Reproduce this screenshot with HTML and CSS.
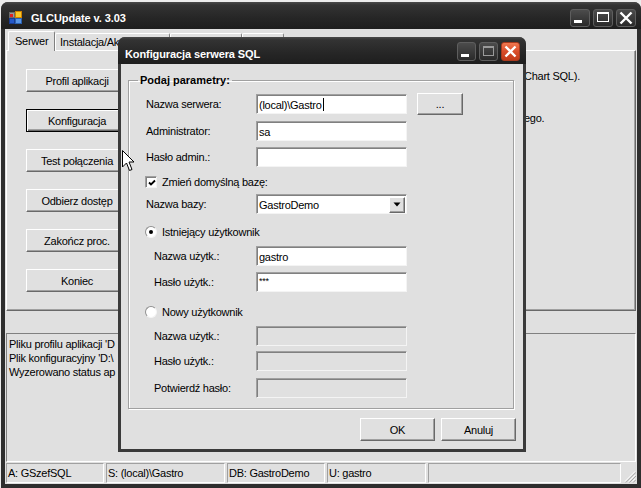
FILE: index.html
```html
<!DOCTYPE html>
<html lang="pl">
<head>
<meta charset="utf-8">
<title>GLCUpdate v. 3.03</title>
<link rel="stylesheet" href="styles.css">
</head>
<body>
<div class="desktop">

  <div class="window main-window">
    <div class="titlebar main-title">
      <svg class="app-icon" width="13" height="13" viewBox="0 0 13 13">
        <rect x="0.5" y="1.5" width="5" height="5" fill="#9a9a9a" stroke="#6a6a6a"/>
        <rect x="1" y="3" width="3" height="3" fill="#e02020"/>
        <rect x="6.5" y="0.5" width="6" height="6" fill="#f8c828" stroke="#d08000"/>
        <rect x="0.5" y="7.5" width="5" height="5" fill="#2458c8" stroke="#1a3c90"/>
        <rect x="6.5" y="7.5" width="6" height="5" fill="#5a96e6" stroke="#2a60b0"/>
      </svg>
      <span class="title">GLCUpdate v. 3.03</span>
      <div class="caption-buttons">
        <span class="cbtn"><svg width="20" height="18" viewBox="0 0 20 18"><rect x="4" y="11" width="8" height="3" fill="#fff"/></svg></span>
        <span class="cbtn"><svg width="20" height="18" viewBox="0 0 20 18"><rect x="4.5" y="3.5" width="11" height="9" fill="none" stroke="#fff"/><rect x="4" y="3" width="12" height="2" fill="#fff"/></svg></span>
        <span class="cbtn"><svg width="20" height="18" viewBox="0 0 20 18"><path d="M4.5 3.5 L15.5 14.5 M15.5 3.5 L4.5 14.5" stroke="#fff" stroke-width="2.4"/></svg></span>
      </div>
    </div>

    <div class="client">
      <div class="tabstrip">
        <span class="tab active">Serwer</span>
        <span class="tab t-install">Instalacja/Ak</span>
        <span class="tab t-tools"></span>
        <span class="tab t-info"></span>
      </div>

      <div class="tabpage">
        <div class="actions">
          <button class="btn action">Profil aplikacji</button>
          <button class="btn action default">Konfiguracja</button>
          <button class="btn action">Test połączenia</button>
          <button class="btn action">Odbierz dostęp</button>
          <button class="btn action">Zakończ proc.</button>
          <button class="btn action">Koniec</button>
        </div>
        <div class="info">
          <div class="info-line">Chart SQL).</div>
          <div class="info-line">&nbsp;</div>
          <div class="info-line">&nbsp;</div>
          <div class="info-line">ego.</div>
        </div>
      </div>

      <div class="splitter"></div>

      <div class="log">
        <div class="log-line">Pliku profilu aplikacji 'D</div>
        <div class="log-line">Plik konfiguracyjny 'D:\</div>
        <div class="log-line">Wyzerowano status ap</div>
      </div>

      <div class="statusbar">
        <span class="panel p1">A: GSzefSQL</span>
        <span class="panel p2">S: (local)\Gastro</span>
        <span class="panel p3">DB: GastroDemo</span>
        <span class="panel p4">U: gastro</span>
        <span class="panel p5"></span>
        <svg class="grip" width="14" height="14" viewBox="0 0 14 14">
          <path d="M13 2 L2 13 M13 6 L6 13 M13 10 L10 13" stroke="#fff" stroke-width="1"/>
          <path d="M14 3 L3 14 M14 7 L7 14 M14 11 L11 14" stroke="#a0a0a0" stroke-width="1"/>
        </svg>
      </div>
    </div>
  </div>

  <div class="window dialog">
    <div class="titlebar dlg-title">
      <span class="title">Konfiguracja serwera SQL</span>
      <div class="caption-buttons">
        <span class="cbtn small"><svg width="19" height="19" viewBox="0 0 19 19"><rect x="4" y="12" width="8" height="3" fill="#fff"/></svg></span>
        <span class="cbtn small"><svg width="19" height="19" viewBox="0 0 19 19"><rect x="4.5" y="4.5" width="10" height="9" fill="none" stroke="#9a9a9a"/><rect x="4" y="4" width="11" height="2" fill="#9a9a9a"/></svg></span>
        <span class="cbtn small close"><svg width="19" height="19" viewBox="0 0 19 19"><path d="M4.5 4.5 L14.5 14.5 M14.5 4.5 L4.5 14.5" stroke="#fff" stroke-width="2.4"/></svg></span>
      </div>
    </div>

    <div class="dlg-body">
      <fieldset class="group">
        <legend>Podaj parametry:</legend>

        <div class="row r1">
          <span class="lbl">Nazwa serwera:</span>
          <span class="field">(local)\Gastro<span class="caret"></span></span>
          <button class="btn browse">...</button>
        </div>
        <div class="row r2">
          <span class="lbl">Administrator:</span>
          <span class="field">sa</span>
        </div>
        <div class="row r3">
          <span class="lbl">Hasło admin.:</span>
          <span class="field"></span>
        </div>
        <div class="row r4 opt">
          <span class="check"><svg width="8" height="8" viewBox="0 0 8 8"><path d="M1 3.5 L3 5.5 L7 1.5" fill="none" stroke="#000" stroke-width="1.8"/></svg></span>
          <span class="opt-text">Zmień domyślną bazę:</span>
        </div>
        <div class="row r5">
          <span class="lbl">Nazwa bazy:</span>
          <span class="field combo">GastroDemo
            <span class="drop"><svg width="8" height="5" viewBox="0 0 8 5"><path d="M0.5 0.5 H7.5 L4 4.5 Z" fill="#000"/></svg></span>
          </span>
        </div>
        <div class="row r6 opt">
          <span class="radio on"></span>
          <span class="opt-text">Istniejący użytkownik</span>
        </div>
        <div class="row r7 sub">
          <span class="lbl">Nazwa użytk.:</span>
          <span class="field">gastro</span>
        </div>
        <div class="row r8 sub">
          <span class="lbl">Hasło użytk.:</span>
          <span class="field pass">***</span>
        </div>
        <div class="row r9 opt">
          <span class="radio"></span>
          <span class="opt-text">Nowy użytkownik</span>
        </div>
        <div class="row r10 sub">
          <span class="lbl">Nazwa użytk.:</span>
          <span class="field disabled"></span>
        </div>
        <div class="row r11 sub">
          <span class="lbl">Hasło użytk.:</span>
          <span class="field disabled"></span>
        </div>
        <div class="row r12 sub">
          <span class="lbl">Potwierdź hasło:</span>
          <span class="field disabled"></span>
        </div>
      </fieldset>

      <div class="dlg-buttons">
        <button class="btn dlg-btn">OK</button>
        <button class="btn dlg-btn">Anuluj</button>
      </div>
    </div>
  </div>

  <svg class="cursor" width="13" height="22" viewBox="0 0 13 22">
    <path d="M0.5 0.5 V17 L4.5 13 L7.5 20.5 L10 19.5 L7 12 H12 Z" fill="#fff" stroke="#000" stroke-linejoin="miter"/>
  </svg>
</div>
</body>
</html>
```

FILE: styles.css
```css
* { box-sizing: border-box; }

html, body {
  margin: 0;
  padding: 0;
}

body {
  width: 641px;
  height: 488px;
  overflow: hidden;
  background: #ececec;
  font-family: "Liberation Sans", Arial, sans-serif;
  font-size: 11px;
  letter-spacing: -0.25px;
  color: #000;
}

.desktop {
  position: relative;
  width: 641px;
  height: 488px;
}

.window {
  position: absolute;
  display: flex;
  flex-direction: column;
}

/* ---------- title bars ---------- */
.titlebar {
  display: flex;
  align-items: center;
  color: #fff;
  background: linear-gradient(#4a4a4a 0, #333 3px, #262626 60%, #1e1e1e 100%);
  border-radius: 7px 7px 0 0;
  flex: none;
}

.title {
  font-weight: bold;
  letter-spacing: -0.1px;
  font-size: 11px;
  white-space: nowrap;
}

.caption-buttons {
  margin-left: auto;
  display: flex;
  gap: 3px;
}

.cbtn {
  display: block;
  width: 20px;
  height: 18px;
  border: 1px solid #5e5e5e;
  border-radius: 3px;
  background: linear-gradient(#4c4c4c, #2a2a2a);
  overflow: hidden;
}

.cbtn svg {
  display: block;
  margin: -1px;
}

.cbtn.small {
  width: 19px;
  height: 19px;
}

.cbtn.close {
  border-color: #a83a1e;
  background: linear-gradient(#f07850, #d94d2a 50%, #c23a18);
}

/* ---------- main window ---------- */
.main-window {
  left: 1px;
  top: 2px;
  width: 640px;
  height: 486px;
  background: #2e2e2e;
  border-radius: 7px 7px 0 0;
  padding: 0 4px 4px;
}

.main-title {
  margin: 0 -4px;
  height: 27px;
  padding: 4px 5px 0 8px;
}

.app-icon {
  display: block;
  margin-right: 9px;
}

.client {
  flex: 1;
  background: #e0e0e0;
  padding: 0 1px;
  display: flex;
  flex-direction: column;
}

.tabstrip {
  height: 21px;
  display: flex;
  align-items: flex-end;
  padding-left: 2px;
  flex: none;
}

.tab {
  height: 17px;
  padding: 2px 4px 0;
  border: 1px solid #fff;
  border-right-color: #808080;
  border-bottom: 0;
  border-radius: 2px 2px 0 0;
  white-space: nowrap;
  background: #e0e0e0;
}

.tab.active {
  height: 20px;
  margin-bottom: -1px;
  padding: 3px 6px 0 6px;
  position: relative;
  z-index: 1;
  width: 47px;
}

.t-install { width: 115px; }
.t-tools { width: 72px; }
.t-info { width: 42px; }

.tabpage {
  height: 261px;
  border: 1px solid;
  border-color: #fff #696969 #696969 #fff;
  box-shadow: inset -1px -1px #a0a0a0;
  display: flex;
  padding: 18px 0 0 19px;
  flex: none;
}

.actions {
  display: flex;
  flex-direction: column;
  gap: 17px;
  width: 102px;
  flex: none;
}

.btn {
  font: inherit;
  letter-spacing: inherit;
  color: #000;
  background: #e0e0e0;
  border: 1px solid;
  border-color: #fff #696969 #696969 #fff;
  box-shadow: inset -1px -1px #a0a0a0;
  padding: 0;
  margin: 0;
  border-radius: 0;
}

.action {
  height: 23px;
  width: 102px;
}

.btn.default {
  border-color: #000;
  box-shadow: inset 1px 1px #fff, inset -1px -1px #696969, inset -2px -2px #a0a0a0;
}

.info {
  margin-left: 396px;
  white-space: nowrap;
}

.info-line {
  line-height: 14px;
}

.splitter {
  height: 22px;
  flex: none;
}

.log {
  height: 129px;
  flex: none;
  border: 1px solid;
  border-color: #808080 #fff #fff #808080;
  padding: 3px 2px;
  line-height: 14px;
  white-space: nowrap;
}

.statusbar {
  height: 22px;
  flex: none;
  display: flex;
  gap: 2px;
  padding-top: 1px;
  align-items: flex-start;
}

.panel {
  height: 20px;
  border: 1px solid;
  border-color: #a0a0a0 #fff #fff #a0a0a0;
  padding-left: 1px;
  line-height: 18px;
  white-space: nowrap;
  flex: none;
}

.p1 { width: 98px; }
.p2 { width: 119px; }
.p3 { width: 98px; }
.p4 { width: 99px; }
.p5 { width: 193px; }

.grip {
  margin-left: auto;
  margin-top: 6px;
  display: block;
}

/* ---------- dialog ---------- */
.dialog {
  left: 118px;
  top: 37px;
  width: 408px;
  height: 415px;
  background: #3a3a3a;
  border-radius: 7px 7px 0 0;
}

.dlg-title {
  height: 27px;
  padding: 5px 6px 0 7px;
  align-items: flex-start;
}

.dlg-title .title {
  margin-top: 6px;
}

.dlg-body {
  flex: 1;
  margin: 0 3px 3px;
  background: #e0e0e0;
  padding: 0 8px 0 7px;
  display: flex;
  flex-direction: column;
}

.group {
  margin: 9px 0 0;
  padding: 6px 0 10px 9px;
  border: 1px solid #a0a0a0;
  box-shadow: inset 1px 1px #fff, 1px 1px #fff;
  min-width: 0;
  width: 386px;
}

.group legend {
  font-weight: bold;
  letter-spacing: 0;
  line-height: 14px;
  padding: 0 2px;
}

.row {
  display: flex;
  align-items: center;
  height: 20px;
  margin-left: 8px;
}

.lbl {
  width: 110px;
  flex: none;
  white-space: nowrap;
}

.sub { margin-left: 16px; }
.sub .lbl { width: 102px; }

.opt { margin-left: 7px; }

.r1 { height: 22px; }
.r2 { margin-top: 6px; }
.r3 { margin-top: 6px; }
.r4 { margin-top: 5px; }
.r5 { margin-top: 2px; }
.r6 { margin-top: 8px; }
.r7 { margin-top: 4px; }
.r8 { margin-top: 6px; }
.r9 { margin-top: 10px; }
.r10 { margin-top: 4px; }
.r11 { margin-top: 5px; }
.r12 { margin-top: 7px; }

.field {
  width: 151px;
  height: 20px;
  background: #fff;
  border: 1px solid;
  border-color: #a0a0a0 #f4f4f4 #f4f4f4 #a0a0a0;
  box-shadow: inset 1px 1px #808080;
  padding: 1px 0 0 2px;
  display: flex;
  align-items: center;
  white-space: nowrap;
  flex: none;
}

.field.disabled {
  background: #e0e0e0;
}

.field.pass {
  align-items: flex-start;
  padding-top: 3px;
  font-size: 9px;
}

.caret {
  display: inline-block;
  width: 1px;
  height: 13px;
  background: #000;
  margin-left: 1px;
}

.browse {
  width: 46px;
  height: 22px;
  margin-left: 10px;
}

.combo {
  padding-right: 1px;
}

.drop {
  margin-left: auto;
  width: 16px;
  height: 16px;
  background: #e0e0e0;
  border: 1px solid;
  border-color: #fff #696969 #696969 #fff;
  box-shadow: inset -1px -1px #a0a0a0;
  display: flex;
  align-items: center;
  justify-content: center;
}

.drop svg { display: block; }

.check {
  width: 12px;
  height: 12px;
  background: #fff;
  border: 1px solid;
  border-color: #a0a0a0 #f4f4f4 #f4f4f4 #a0a0a0;
  box-shadow: inset 1px 1px #808080;
  display: flex;
  align-items: center;
  justify-content: center;
  flex: none;
}

.check svg { display: block; margin: 1px 0 0 1px; }

.radio {
  width: 12px;
  height: 12px;
  border-radius: 50%;
  background: #fff;
  border: 1px solid;
  border-color: #909090 #f4f4f4 #f4f4f4 #909090;
  display: flex;
  align-items: center;
  justify-content: center;
  flex: none;
}

.radio.on::after {
  content: "";
  width: 4px;
  height: 4px;
  border-radius: 50%;
  background: #000;
}

.opt-text {
  margin-left: 5px;
  white-space: nowrap;
}

.dlg-buttons {
  display: flex;
  justify-content: flex-end;
  gap: 6px;
  margin-top: 9px;
  margin-right: -1px;
}

.dlg-btn {
  width: 75px;
  height: 23px;
}

.cursor {
  position: absolute;
  left: 122px;
  top: 150px;
  display: block;
}
```
